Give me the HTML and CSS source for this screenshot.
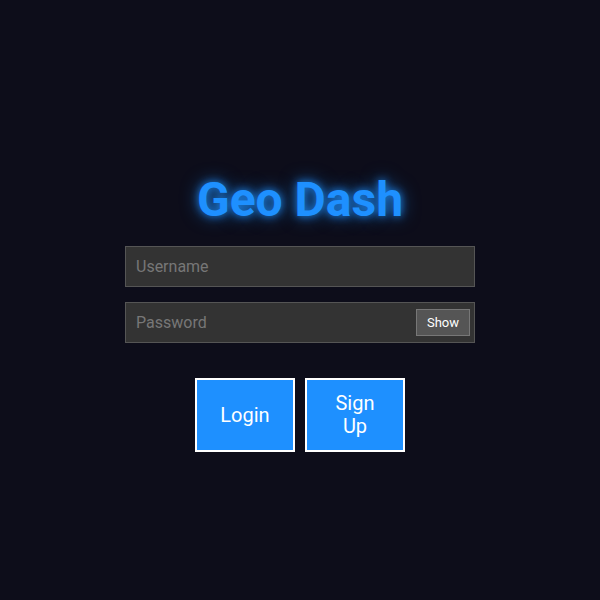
FILE: index.html
```html
<!DOCTYPE html>
<html lang="en">
<head>
<meta charset="utf-8">
<title>Geo Dash</title>
<link rel="stylesheet" href="styles.css">
</head>
<body>
<main class="login">
  <h1 class="title">Geo Dash</h1>
  <div class="field">
    <input class="input" type="text" placeholder="Username">
  </div>
  <div class="field">
    <input class="input" type="password" placeholder="Password">
    <button class="show" type="button">Show</button>
  </div>
  <div class="actions">
    <button class="btn" type="button">Login</button>
    <button class="btn" type="button">Sign Up</button>
  </div>
</main>
</body>
</html>
```

FILE: styles.css
```css
html, body {
  margin: 0;
  padding: 0;
}
body {
  background: #0d0d1a;
  font-family: Roboto, "Liberation Sans", sans-serif;
  min-height: 100vh;
}
.login {
  display: flex;
  flex-direction: column;
  align-items: center;
  padding-top: 172px;
}
.title {
  margin: 0 0 18px;
  font-size: 48px;
  font-weight: 700;
  line-height: 56px;
  color: #1e90ff;
  text-shadow: 0 0 8px rgba(30,144,255,0.9), 0 0 18px rgba(30,144,255,0.6);
}
.field {
  position: relative;
  width: 350px;
  margin-bottom: 15px;
}
.input {
  box-sizing: border-box;
  display: block;
  width: 100%;
  height: 41px;
  padding: 0 10px;
  background: #333333;
  border: 1px solid #555555;
  color: #dddddd;
  font-family: Roboto, "Liberation Sans", sans-serif;
  font-size: 16px;
  outline: none;
}
.input::placeholder {
  color: #777777;
}
.show {
  position: absolute;
  right: 5px;
  top: 7px;
  height: 27px;
  padding: 0 10px;
  background: #555555;
  border: 1px solid #777777;
  color: #ffffff;
  font-family: Roboto, "Liberation Sans", sans-serif;
  font-size: 13px;
}
.actions {
  display: flex;
  gap: 10px;
  margin-top: 20px;
}
.btn {
  box-sizing: border-box;
  width: 100px;
  min-height: 74px;
  padding: 12px 15px;
  background: #1e90ff;
  border: 2px solid #ffffff;
  color: #ffffff;
  font-family: Roboto, "Liberation Sans", sans-serif;
  font-size: 20px;
  line-height: 23px;
}
```
